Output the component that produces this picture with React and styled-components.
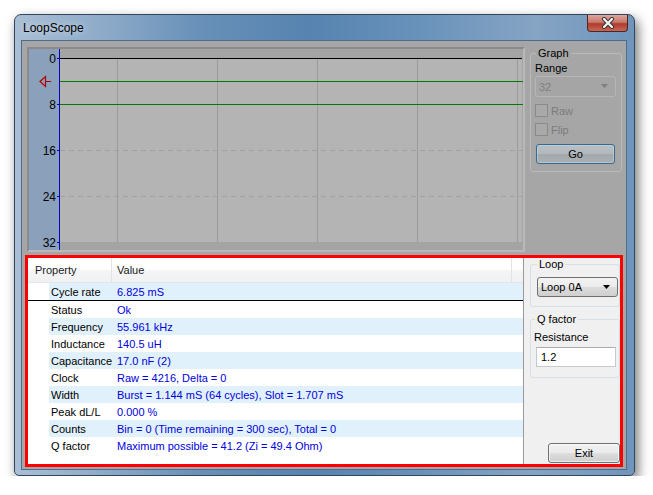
import React from "react";
import styled, { createGlobalStyle } from "styled-components";

const GlobalStyle = createGlobalStyle`
  body {
    margin: 0;
    background: #ffffff;
    font-family: "Liberation Sans", Arial, sans-serif;
    font-size: 11px;
  }
`;

const Page = styled.div`
  padding: 14px 0 0 14px;
`;

const Window = styled.div`
  box-sizing: border-box;
  width: 621px;
  height: 462px;
  display: flex;
  flex-direction: column;
  border: 1px solid #34465c;
  border-radius: 7px 7px 5px 5px;
  background: linear-gradient(
    to right,
    #a9bfd5 0%,
    #8eabc9 14%,
    #6890b8 30%,
    #5683b0 48%,
    #6a93bb 66%,
    #86a4c4 84%,
    #6f95bc 100%
  );
  box-shadow: 3px 5px 12px rgba(0, 0, 0, 0.55);
`;

const TitleBar = styled.div`
  height: 25px;
  display: flex;
  align-items: center;
`;

const Title = styled.span`
  padding-left: 8px;
  font-size: 12px;
  color: #000;
  text-shadow: 0 0 6px rgba(255, 255, 255, 0.7);
`;

const CloseButton = styled.div`
  box-sizing: border-box;
  margin-left: auto;
  margin-right: 6px;
  align-self: flex-start;
  width: 41px;
  height: 17px;
  display: flex;
  align-items: center;
  justify-content: center;
  border: 1px solid #4e2520;
  border-top: none;
  border-radius: 0 0 4px 4px;
  background: linear-gradient(#dca79c 0%, #c9786a 45%, #b03a2b 55%, #c4685a 100%);
`;

const Client = styled.div`
  box-sizing: border-box;
  height: 430px;
  margin: 0 7px 5px 6px;
  border: 1px solid #4d6c8e;
  background: #a6a6a6;
  display: flex;
  flex-direction: column;
`;

const Upper = styled.div`
  height: 214px;
  box-sizing: border-box;
  padding: 6px 0 0 5px;
  display: flex;
  gap: 5px;
  align-items: flex-start;
`;

const GraphFrame = styled.div`
  box-sizing: border-box;
  width: 498px;
  height: 205px;
  border: 2px solid;
  border-color: #8a8a8a #b9b9b9 #b9b9b9 #8a8a8a;
  svg {
    display: block;
  }
`;

const GroupBox = styled.fieldset`
  box-sizing: border-box;
  width: ${(p) => p.$width}px;
  margin: ${(p) => p.$top}px 0 0 0;
  padding: ${(p) => p.$pad};
  border: 1px solid ${(p) => (p.$dim ? "#bababa" : "#d5dfe5")};
  border-radius: 3px;
  display: flex;
  flex-direction: column;
`;

const Legend = styled.legend`
  padding: 0 2px;
  margin-left: 1px;
  line-height: 13px;
  color: #000;
`;

const FieldLabel = styled.div`
  line-height: 13px;
  color: #000;
`;

const Combo = styled.div`
  box-sizing: border-box;
  width: 81px;
  height: ${(p) => p.$h}px;
  margin: ${(p) => p.$m};
  display: flex;
  align-items: center;
  justify-content: space-between;
  padding: 0 7px 0 3px;
  border: 1px solid ${(p) => (p.$disabled ? "#b6b6b6" : "#707070")};
  border-radius: 3px;
  color: ${(p) => (p.$disabled ? "#7e7e7e" : "#000")};
  background: ${(p) =>
    p.$disabled
      ? "#a5a5a5"
      : "linear-gradient(#f3f3f3 0%, #ebebeb 48%, #dcdcdc 52%, #cfcfcf 100%)"};
`;

const CheckRow = styled.div`
  display: flex;
  align-items: center;
  height: 13px;
  margin-top: ${(p) => p.$m}px;
  color: #7c7c7c;
`;

const CheckBox = styled.span`
  box-sizing: border-box;
  width: 13px;
  height: 13px;
  border: 1px solid #8a8a8a;
  background: #a9a9a9;
  margin-right: 3px;
`;

const ButtonSlot = styled.div`
  margin: ${(p) => p.$m};
  align-self: ${(p) => p.$align || "auto"};
`;

const Button = styled.div`
  box-sizing: border-box;
  width: ${(p) => p.$w}px;
  height: 20px;
  display: flex;
  align-items: center;
  justify-content: center;
  border-radius: 3px;
  color: #000;
  border: 1px solid ${(p) => (p.$dim ? "#39698f" : "#707070")};
  background: ${(p) =>
    p.$dim
      ? "linear-gradient(#b9c0c5 0%, #b2b8bc 48%, #a3a8ac 52%, #aab0b4 100%)"
      : "linear-gradient(#f2f2f2 0%, #ebebeb 48%, #dddddd 52%, #cfcfcf 100%)"};
  box-shadow: inset 0 0 0 1px
    ${(p) => (p.$dim ? "rgba(190, 215, 232, 0.55)" : "rgba(255,255,255,0.6)")};
`;

const Lower = styled.div`
  box-sizing: border-box;
  width: 598px;
  height: 212px;
  margin-left: 3px;
  border: 3px solid #ff0000;
  background: #f0f0f0;
  display: flex;
`;

const ListView = styled.div`
  box-sizing: border-box;
  width: 496px;
  background: #ffffff;
  border-right: 1px solid #9a9a9a;
`;

const ListHeader = styled.div`
  display: flex;
  height: 24px;
  border-bottom: 1px solid #e3e5e8;
  background: linear-gradient(#ffffff 0%, #ffffff 45%, #f4f5f7 55%, #f0f1f3 100%);
`;

const HeaderCell = styled.div`
  box-sizing: border-box;
  width: ${(p) => p.$w}px;
  padding-left: ${(p) => p.$pad}px;
  line-height: 24px;
  color: #1a1a1a;
  border-right: 1px solid #e2e3e5;
`;

const Row = styled.div`
  display: flex;
  height: 17px;
  border-bottom: ${(p) => (p.$sep ? "1px solid #000" : "none")};
`;

const Indent = styled.div`
  width: 21px;
`;

const Cells = styled.div`
  flex: 1;
  display: flex;
  background: ${(p) => (p.$alt ? "#e1f1fb" : "#ffffff")};
  line-height: 18px;
`;

const LabelCell = styled.div`
  width: 61px;
  padding-left: 2px;
  color: #000;
  white-space: nowrap;
`;

const ValueCell = styled.div`
  flex: 1;
  padding-left: 5px;
  color: #0000e0;
  white-space: nowrap;
`;

const SidePanel = styled.div`
  flex: 1;
  display: flex;
  flex-direction: column;
  padding-left: 6px;
`;

const TextBox = styled.div`
  box-sizing: border-box;
  width: 80px;
  height: 20px;
  margin: 3px 0 0 2px;
  padding-left: 4px;
  line-height: 18px;
  border: 1px solid #c5c8cc;
  border-top-color: #abadb3;
  background: #ffffff;
  color: #000;
`;

const rows = [
  ["Cycle rate", "6.825 mS"],
  ["Status", "Ok"],
  ["Frequency", "55.961 kHz"],
  ["Inductance", "140.5 uH"],
  ["Capacitance", "17.0 nF (2)"],
  ["Clock", "Raw = 4216, Delta = 0"],
  ["Width", "Burst = 1.144 mS (64 cycles), Slot = 1.707 mS"],
  ["Peak dL/L", "0.000 %"],
  ["Counts", "Bin = 0 (Time remaining = 300 sec), Total = 0"],
  ["Q factor", "Maximum possible = 41.2 (Zi = 49.4 Ohm)"],
];

const ticks = [
  { y: 9.5, label: "0" },
  { y: 55.5, label: "8" },
  { y: 101.5, label: "16" },
  { y: 147.5, label: "24" },
  { y: 193.5, label: "32" },
];

const Arrow = ({ color }) => (
  <svg width="7" height="5" viewBox="0 0 7 5">
    <path d="M0 0 L7 0 L3.5 4 Z" fill={color} />
  </svg>
);

const Chart = () => (
  <svg width="494" height="201">
    <rect x="0" y="0" width="30" height="201" fill="#8ba1bb" />
    <rect x="30" y="0" width="464" height="201" fill="#a4a4a4" />
    <rect x="31" y="9" width="462" height="184" fill="#b4b4b4" />
    {[88.5, 188.5, 288.5, 388.5, 488.5].map((x) => (
      <line key={x} x1={x} y1="10" x2={x} y2="193" stroke="#9c9c9c" />
    ))}
    {[101.5, 147.5].map((y) => (
      <line
        key={y}
        x1="31"
        y1={y}
        x2="493"
        y2={y}
        stroke="#a0a0a0"
        strokeDasharray="5 4"
      />
    ))}
    <line x1="31" y1="9.5" x2="493" y2="9.5" stroke="#000" />
    <line x1="31" y1="32.5" x2="494" y2="32.5" stroke="#007a00" />
    <line x1="31" y1="55.5" x2="494" y2="55.5" stroke="#007a00" />
    <line x1="30.5" y1="0" x2="30.5" y2="201" stroke="#0000c0" />
    {ticks.map((t) => (
      <g key={t.label}>
        <line x1="28" y1={t.y} x2="30" y2={t.y} stroke="#0000c0" />
        <text
          x="27"
          y={t.y + 4}
          textAnchor="end"
          fontFamily="Liberation Sans, Arial, sans-serif"
          fontSize="12"
          fill="#000"
        >
          {t.label}
        </text>
      </g>
    ))}
    <path
      d="M11 32.5 L16.5 27.5 L16.5 37.5 Z M16.5 32.5 L22 32.5"
      fill="none"
      stroke="#b00000"
      strokeWidth="1.2"
    />
  </svg>
);

export default function App() {
  return (
    <Page>
      <GlobalStyle />
      <Window>
        <TitleBar>
          <Title>LoopScope</Title>
          <CloseButton>
            <svg width="14" height="12" viewBox="0 0 14 12">
              <path d="M3 2 L11 10 M11 2 L3 10" stroke="#3a3a3a" strokeWidth="4.2" strokeLinecap="round" />
              <path d="M3 2 L11 10 M11 2 L3 10" stroke="#f4f4f4" strokeWidth="2.2" strokeLinecap="round" />
            </svg>
          </CloseButton>
        </TitleBar>
        <Client>
          <Upper>
            <GraphFrame>
              <Chart />
            </GraphFrame>
            <GroupBox $width={91} $top={0} $pad="2px 5px 7px 4px" $dim>
              <Legend>Graph</Legend>
              <FieldLabel>Range</FieldLabel>
              <Combo $disabled $h={21} $m="1px 0 0 0">
                <span>32</span>
                <Arrow color="#7e7e7e" />
              </Combo>
              <CheckRow $m={7}>
                <CheckBox />
                Raw
              </CheckRow>
              <CheckRow $m={6}>
                <CheckBox />
                Flip
              </CheckRow>
              <ButtonSlot $m="8px 0 0 1px">
                <Button $w={79} $dim>
                  Go
                </Button>
              </ButtonSlot>
            </GroupBox>
          </Upper>
          <Lower>
            <ListView>
              <ListHeader>
                <HeaderCell $w={84} $pad={7}>
                  Property
                </HeaderCell>
                <HeaderCell $w={400} $pad={5}>
                  Value
                </HeaderCell>
              </ListHeader>
              {rows.map(([label, value], i) => (
                <Row key={label} $sep={i === 0}>
                  <Indent />
                  <Cells $alt={i % 2 === 0}>
                    <LabelCell>{label}</LabelCell>
                    <ValueCell>{value}</ValueCell>
                  </Cells>
                </Row>
              ))}
            </ListView>
            <SidePanel>
              <GroupBox $width={90} $top={0} $pad="6px 0 9px 5px">
                <Legend>Loop</Legend>
                <Combo $h={20} $m="0 0 0 1px">
                  <span>Loop 0A</span>
                  <Arrow color="#000" />
                </Combo>
              </GroupBox>
              <GroupBox $width={90} $top={6} $pad="5px 0 10px 3px">
                <Legend>Q factor</Legend>
                <FieldLabel>Resistance</FieldLabel>
                <TextBox>1.2</TextBox>
              </GroupBox>
              <ButtonSlot $m="auto 0 1px 0" $align="flex-end">
                <Button $w={72}>Exit</Button>
              </ButtonSlot>
            </SidePanel>
          </Lower>
        </Client>
      </Window>
    </Page>
  );
}
